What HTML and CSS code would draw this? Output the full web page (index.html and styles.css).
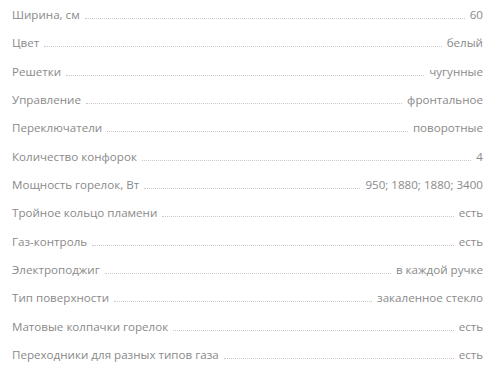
FILE: index.html
```html
<!DOCTYPE html>
<html lang="ru">
<head>
    <meta charset="UTF-8">
    <meta name="viewport" content="width=device-width, initial-scale=1.0">
    <title>Характеристики</title>
    <link rel="stylesheet" href="styles.css">
</head>
<body>
    <ul class="specs">
        <li class="spec"><span class="spec-name">Ширина, см</span><span class="spec-dots"></span><span class="spec-value">60</span></li>
        <li class="spec"><span class="spec-name">Цвет</span><span class="spec-dots"></span><span class="spec-value">белый</span></li>
        <li class="spec"><span class="spec-name">Решетки</span><span class="spec-dots"></span><span class="spec-value">чугунные</span></li>
        <li class="spec"><span class="spec-name">Управление</span><span class="spec-dots"></span><span class="spec-value">фронтальное</span></li>
        <li class="spec"><span class="spec-name">Переключатели</span><span class="spec-dots"></span><span class="spec-value">поворотные</span></li>
        <li class="spec"><span class="spec-name">Количество конфорок</span><span class="spec-dots"></span><span class="spec-value">4</span></li>
        <li class="spec"><span class="spec-name">Мощность горелок, Вт</span><span class="spec-dots"></span><span class="spec-value">950; 1880; 1880; 3400</span></li>
        <li class="spec"><span class="spec-name">Тройное кольцо пламени</span><span class="spec-dots"></span><span class="spec-value">есть</span></li>
        <li class="spec"><span class="spec-name">Газ-контроль</span><span class="spec-dots"></span><span class="spec-value">есть</span></li>
        <li class="spec"><span class="spec-name">Электроподжиг</span><span class="spec-dots"></span><span class="spec-value">в каждой ручке</span></li>
        <li class="spec"><span class="spec-name">Тип поверхности</span><span class="spec-dots"></span><span class="spec-value">закаленное стекло</span></li>
        <li class="spec"><span class="spec-name">Матовые колпачки горелок</span><span class="spec-dots"></span><span class="spec-value">есть</span></li>
        <li class="spec"><span class="spec-name">Переходники для разных типов газа</span><span class="spec-dots"></span><span class="spec-value">есть</span></li>
    </ul>
</body>
</html>
```

FILE: styles.css
```css
body { margin: 0; background: #fff; font-family: "Open Sans", "Liberation Sans", sans-serif; font-size: 11.6px; color: #8a8a8a; }
.specs { list-style: none; margin: 0; padding: 5px 17px 0 12px; }
.spec { display: flex; align-items: baseline; height: 28.33px; line-height: 20px; }
.spec-name, .spec-value { white-space: nowrap; }
.spec-dots { flex: 1; margin: 0 5px; border-bottom: 1px dotted #c8c8c8; }
```
